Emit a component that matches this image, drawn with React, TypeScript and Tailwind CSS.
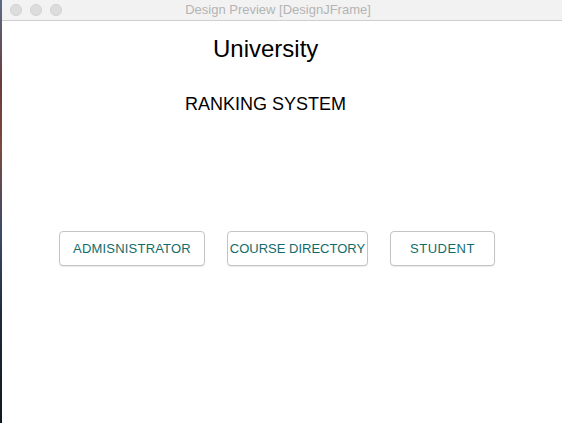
import React from "react";

const font = { fontFamily: '"Liberation Sans", Arial, sans-serif' };

function Btn({ label, w, extra }: { label: string; w: string; extra: string }) {
  return (
    <button
      className={`h-[35px] ${w} ${extra} text-[13px] rounded-[4px] border border-[#c4c4c4] bg-white text-[#136c69] shadow-[0_1px_1px_rgba(0,0,0,0.08)] flex items-center justify-center whitespace-nowrap`}
      style={font}
    >
      {label}
    </button>
  );
}

export default function App() {
  return (
    <div className="w-[562px] h-[423px] flex bg-white overflow-hidden" style={font}>
      <div className="w-[2px] h-full bg-[linear-gradient(180deg,#5a6b86_0%,#6b3b3b_20%,#7a4b40_35%,#3d4a6a_55%,#1e2a3a_75%,#0f1a1e_100%)]" />
      <div className="flex-1 flex flex-col">
        <div className="h-[21px] bg-[#f2f2f2] border-b border-[#cfcfcf] flex items-center relative">
          <div className="flex gap-[8px] pl-[8px]">
            <div className="w-[12px] h-[12px] rounded-full bg-[#dcdcdc] border border-[#d2d2d2]" />
            <div className="w-[12px] h-[12px] rounded-full bg-[#dcdcdc] border border-[#d2d2d2]" />
            <div className="w-[12px] h-[12px] rounded-full bg-[#dcdcdc] border border-[#d2d2d2]" />
          </div>
          <div className="absolute left-0 right-0 top-0 h-[20px] flex items-center justify-center text-[13px] text-[#b4b4b4] pointer-events-none pr-[8px]">
            Design Preview [DesignJFrame]
          </div>
        </div>
        <div className="flex-1 flex flex-col">
          <div className="pl-[211px] pt-[14px] text-[24px] leading-[28px] text-black">University</div>
          <div className="pl-[183px] pt-[31px] text-[18px] leading-[21px] text-black">RANKING SYSTEM</div>
          <div className="flex pl-[57px] pt-[116px] gap-[22px]">
            <Btn label="ADMISNISTRATOR" w="w-[146px]" extra="tracking-[0.2px]" />
            <Btn label="COURSE DIRECTORY" w="w-[141px]" extra="tracking-[0px]" />
            <Btn label="STUDENT" w="w-[105px]" extra="tracking-[0.5px]" />
          </div>
        </div>
      </div>
    </div>
  );
}
